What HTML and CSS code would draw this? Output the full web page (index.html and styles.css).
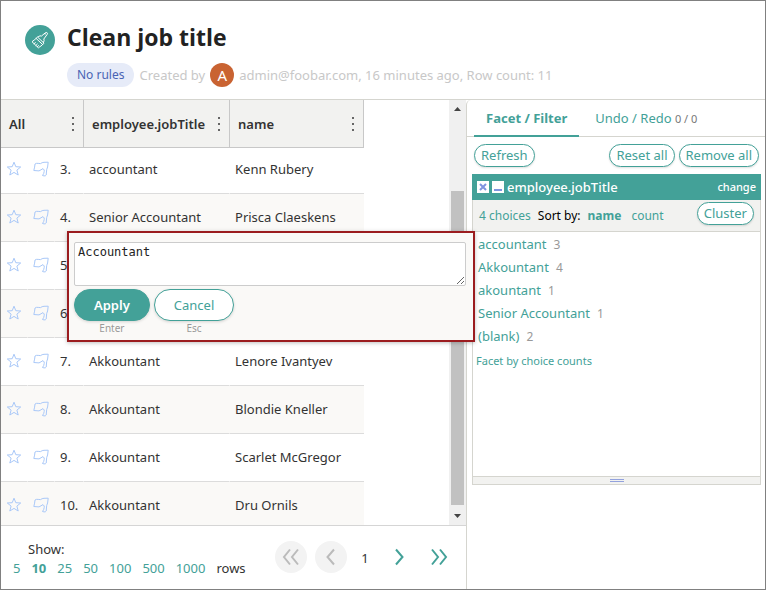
FILE: index.html
```html
<!DOCTYPE html>
<html lang="en">
<head>
<meta charset="utf-8">
<title>Clean job title</title>
<link rel="stylesheet" href="styles.css">
</head>
<body>
<svg class="defs" aria-hidden="true">
  <symbol id="star" viewBox="0 0 16 16"><path d="M8 1.200l1.800 4.500 4.900.3-3.800 3.100 1.300 4.900L8 11.400 3.800 14l1.300-4.900L1.300 6l4.900-.3z"/></symbol>
  <symbol id="flag" viewBox="0 0 16 16"><path d="M2 3Q3.500 2 5.200 2.400L7.500 2.600Q9 1.400 11 1.300L15.200 1.200 14.600 6 13.700 8.500 13.200 14Q12.500 15.200 11 14.900L9.500 14.500Q11 12.500 11.200 10.500L11.200 9 10 7.600 8 8.800 6 9.900 .8 9.500Q1.800 6 2 3Z"/></symbol>
  <symbol id="dots" viewBox="0 0 4 16"><path d="M1 1h2v2H1zM1 7h2v2H1zM1 13h2v2H1z"/></symbol>
</svg>
<div class="app">
  <header class="top">
    <span class="logo"><svg viewBox="0 0 30 30" width="30" height="30"><path d="M10.200 14.200l2.300-2.200 6.500 6.200-2 2-3.600 2.600L7.300 17zM11.100 13.400l6.600 6.200M13 12l2-1.200 1.400.3 4.200-3.500q1.400-.6 1.800.5.3.8-.5 1.700L18.800 14l.3 1.500-.6 2M9 18.700l1.400-1M10.800 20.500l1.500-1.400M12.300 21.800l1.300-1.200M20 9.300l.7-.6"/></svg></span>
    <div>
      <h1>Clean job title</h1>
      <div class="meta"><span class="pill">No rules</span><span class="by">Created by</span><span class="avatar">A</span><span>admin@foobar.com, 16 minutes ago, Row count: 11</span></div>
    </div>
  </header>
  <div class="main">
    <section class="left">
      <div class="grid-area">
        <div class="grid-view">
          <table>
            <colgroup><col class="c-icon"><col class="c-icon"><col class="c-num"><col class="c-title"><col class="c-name"></colgroup>
            <thead><tr>
              <th colspan="3"><div class="head">All<button aria-label="All menu"><svg><use href="#dots"/></svg></button></div></th>
              <th><div class="head">employee.jobTitle<button aria-label="Job title menu"><svg><use href="#dots"/></svg></button></div></th>
              <th><div class="head">name<button aria-label="Name menu"><svg><use href="#dots"/></svg></button></div></th>
            </tr></thead>
            <tbody>
              <tr class="first"><td><svg class="ico"><use href="#star"/></svg></td><td><svg class="ico"><use href="#flag"/></svg></td><td>3.</td><td>accountant</td><td>Kenn Rubery</td></tr>
              <tr><td><svg class="ico"><use href="#star"/></svg></td><td><svg class="ico"><use href="#flag"/></svg></td><td>4.</td><td>Senior Accountant</td><td>Prisca Claeskens</td></tr>
              <tr><td><svg class="ico"><use href="#star"/></svg></td><td><svg class="ico"><use href="#flag"/></svg></td><td>5.</td><td></td><td></td></tr>
              <tr><td><svg class="ico"><use href="#star"/></svg></td><td><svg class="ico"><use href="#flag"/></svg></td><td>6.</td><td></td><td></td></tr>
              <tr><td><svg class="ico"><use href="#star"/></svg></td><td><svg class="ico"><use href="#flag"/></svg></td><td>7.</td><td>Akkountant</td><td>Lenore Ivantyev</td></tr>
              <tr><td><svg class="ico"><use href="#star"/></svg></td><td><svg class="ico"><use href="#flag"/></svg></td><td>8.</td><td>Akkountant</td><td>Blondie Kneller</td></tr>
              <tr><td><svg class="ico"><use href="#star"/></svg></td><td><svg class="ico"><use href="#flag"/></svg></td><td>9.</td><td>Akkountant</td><td>Scarlet McGregor</td></tr>
              <tr><td><svg class="ico"><use href="#star"/></svg></td><td><svg class="ico"><use href="#flag"/></svg></td><td>10.</td><td>Akkountant</td><td>Dru Ornils</td></tr>
            </tbody>
          </table>
        </div>
        <div class="scrollbar">
          <svg viewBox="0 0 17 17"><path d="M5 11h7L8.500 7z"/></svg>
          <div class="track"><div class="thumb"></div></div>
          <svg viewBox="0 0 17 17"><path d="M5 6h7l-3.500 4z"/></svg>
        </div>
      </div>
      <footer class="pager">
        <div class="sizes">
          <div class="show">Show:</div>
          <div class="links"><a href="#">5</a><a href="#" class="on">10</a><a href="#">25</a><a href="#">50</a><a href="#">100</a><a href="#">500</a><a href="#">1000</a><span>rows</span></div>
        </div>
        <nav class="pages">
          <button class="off" aria-label="First page" disabled><svg viewBox="0 0 32 32"><path d="M15 8.500l-6 7.500 6 7.500M23 8.500L17 16l6 7.500"/></svg></button>
          <button class="off" aria-label="Previous page" disabled><svg viewBox="0 0 32 32"><path d="M19 8.500L12.500 16l6.500 7.500"/></svg></button>
          <span>1</span>
          <button aria-label="Next page"><svg viewBox="0 0 32 32"><path d="M13 8.500l6.500 7.500-6.500 7.500"/></svg></button>
          <button aria-label="Last page"><svg viewBox="0 0 32 32"><path d="M9 8.500l6 7.500-6 7.500M17 8.500l6 7.500-6 7.500"/></svg></button>
        </nav>
      </footer>
    </section>
    <aside class="right">
      <nav class="tabs"><a href="#" class="on">Facet / Filter</a><a href="#">Undo / Redo <small>0 / 0</small></a></nav>
      <div class="tools"><button class="round">Refresh</button><span class="spacer"></span><button class="round">Reset all</button><button class="round">Remove all</button></div>
      <section class="facet">
        <div class="facet-head">
          <button class="mini" aria-label="Remove facet"><svg viewBox="0 0 12 12"><path d="M3 3l6 6M9 3L3 9"/></svg></button>
          <button class="mini" aria-label="Minimize facet"><svg viewBox="0 0 12 12"><path d="M2 9h8"/></svg></button>
          <span>employee.jobTitle</span><a href="#">change</a>
        </div>
        <div class="facet-bar"><a href="#">4 choices</a><span>Sort by:</span><a href="#" class="on">name</a><a href="#" class="count">count</a><button class="round">Cluster</button></div>
        <div class="facet-body">
          <ul>
            <li><a href="#">accountant</a> 3</li>
            <li><a href="#">Akkountant</a> 4</li>
            <li><a href="#">akountant</a> 1</li>
            <li><a href="#">Senior Accountant</a> 1</li>
            <li><a href="#">(blank)</a> 2</li>
          </ul>
          <a href="#" class="by-count">Facet by choice counts</a>
        </div>
        <div class="grip"><i></i></div>
      </section>
    </aside>
  </div>
  <form class="popup">
    <textarea aria-label="Cell value" spellcheck="false">Accountant</textarea>
    <div class="actions">
      <div><button type="button" class="apply">Apply</button><span>Enter</span></div>
      <div><button type="button">Cancel</button><span>Esc</span></div>
    </div>
  </form>
</div>
</body>
</html>
```
FILE: styles.css
```css
* { box-sizing: border-box; }
body { margin: 0; font: 13px/20px "Noto Sans", "Open Sans", sans-serif; color: #333; background: #fff; }
a { color: #43a198; text-decoration: none; }
button { font: inherit; color: #43a198; background: none; border: 0; padding: 0; margin: 0; }
.defs { position: absolute; width: 0; height: 0; }
.app { position: relative; display: flex; flex-direction: column; height: 100vh; min-height: 590px; border: 1px solid #808080; }

.top { display: flex; gap: 12px; height: 99px; padding: 20px 24px 0; border-bottom: 1px solid #d5d5cf; }
.logo { width: 30px; height: 30px; margin-top: 4px; border-radius: 50%; background: #43a198; }
.logo path { fill: none; stroke: #fff; stroke-width: 1; stroke-linejoin: round; stroke-linecap: round; }
h1 { margin: 0; font: 700 23px/32px "Open Sans", "Noto Sans", sans-serif; color: #222; }
.meta { display: flex; align-items: center; gap: 5px; margin-top: 10px; color: #c8c8c8; white-space: nowrap; }
.pill { height: 24px; padding: 0 10px; border-radius: 12px; background: #e6ebf8; color: #4a64b4; font-size: 12px; line-height: 24px; }
.avatar { width: 24px; height: 24px; border-radius: 50%; background: #c96332; color: #fff; font-size: 15px; line-height: 24px; text-align: center; }

.main { flex: 1; display: grid; grid-template-columns: minmax(0, 465fr) minmax(0, 299fr); min-height: 0; }
.left { display: flex; flex-direction: column; min-height: 0; }
.grid-area { flex: 1; display: flex; justify-content: space-between; min-height: 0; overflow: hidden; border-bottom: 1px solid #d5d5d5; }
.grid-view { overflow: hidden; }
table { border-spacing: 0; table-layout: fixed; width: 363px; }
.c-icon { width: 27px; }
.c-num { width: 29px; }
.c-title { width: 146px; }
.c-name { width: 134px; }
th { height: 48px; padding: 0 5px 0 8px; text-align: left; font-weight: 600; color: #333; background: #f2f2f0; border-right: 1px solid #c8c8c8; border-bottom: 1px solid #c8c8c8; }
.head { display: flex; justify-content: space-between; align-items: center; }
.head button { display: flex; padding: 0 3px; }
.head svg { width: 4px; height: 16px; fill: #666; }
td { height: 48px; padding: 0 5px 2px; border-right: 1px solid transparent; border-bottom: 1px solid #dcdcdc; white-space: nowrap; }
td:last-child { border-right: 0; }
.first td { height: 46px; padding-bottom: 4px; }
tbody tr:nth-child(even) { background: #faf9f7; }
.ico { display: block; width: 16px; height: 16px; fill: none; stroke: #a9c8f8; stroke-width: 1; stroke-linejoin: round; }
.scrollbar { display: flex; flex-direction: column; width: 17px; background: #f0f0f0; }
.scrollbar svg { width: 17px; height: 17px; fill: #444; }
.track { flex: 1; display: flex; align-items: flex-end; padding: 0 2px 3px; }
.thumb { width: 100%; height: 81%; background: #c1c1c1; }

.pager { display: flex; justify-content: space-between; height: 63px; padding: 14px 11px 0 12px; }
.sizes { line-height: 19px; white-space: nowrap; }
.show { margin-left: 15px; }
.links { display: flex; gap: 11px; }
.links .on, .facet-bar .on { font-weight: 700; }
.pages { display: flex; gap: 8px; margin-top: 1px; line-height: 34px; }
.pages > span { width: 20px; text-align: center; }
.pages button { display: flex; width: 32px; height: 32px; border-radius: 50%; }
.pages .off { background: #f3f3f3; color: #bbb; }
.pages svg { width: 32px; height: 32px; fill: none; stroke: currentColor; stroke-width: 2; }

.right { border-left: 1px solid #d5d5cf; border-top-left-radius: 5px; padding: 0 4px 0 5px; }
.tabs { display: flex; gap: 4px; height: 37px; margin: 0 -4px 0 -5px; padding: 0 7px; border-bottom: 1px solid #d5d5cf; white-space: nowrap; }
.tabs a { height: 37px; padding: 8px 12px 0; }
.tabs .on { font-weight: 700; border-bottom: 2px solid #43a198; }
.tabs small { font-size: 11px; color: #777; }
.tools { display: flex; gap: 4px; padding: 7px 2px 7px; }
.spacer { flex: 1; }
.round { height: 23px; padding: 0 6px; border: 1px solid #43a198; border-radius: 12px; background: #fff; line-height: 21px; white-space: nowrap; box-shadow: 0 1px 2px rgba(0, 0, 0, .12); }
.facet { border: 1px solid #d5d5cf; }
.facet-head { display: flex; align-items: center; gap: 3px; height: 26px; margin: -1px -1px 0; padding: 0 5px; background: #43a198; color: #fff; font-weight: 500; }
.facet-head a { margin-left: auto; color: #fff; font-size: 11px; }
.mini { display: flex; width: 12px; height: 12px; background: #fff; }
.mini svg { width: 12px; height: 12px; stroke: #7f93df; stroke-width: 2; }
.facet-bar { display: flex; align-items: center; gap: 7px; height: 32px; padding: 0 6px; border-bottom: 1px solid #d5d5cf; background: #f2f2f0; font-size: 12px; white-space: nowrap; }
.facet-bar span { color: #000; }
.facet-bar .count { margin-left: 3px; }
.facet-bar .round { margin-left: auto; margin-bottom: 5px; font-size: 13px; }
.facet-body { height: 245px; padding: 1px 3px; border-bottom: 1px solid #d5d5cf; }
ul { list-style: none; margin: 0; padding: 0 2px; line-height: 23px; color: #999; font-size: 12px; }
ul a { font-size: 13px; margin-right: 4px; }
.by-count { display: block; margin-top: 2px; font-size: 11px; line-height: 22px; }
.grip { display: flex; justify-content: center; align-items: center; height: 7px; background: #f2f2f0; }
.grip i { width: 14px; height: 3px; border: solid #93a2dd; border-width: 1px 0; }

.popup { position: absolute; left: 66px; top: 230px; width: 408px; height: 111px; padding: 9px 7px 0 5px; background: #faf9f7; border: 2px solid #9b1c1f; box-shadow: 0 1px 4px rgba(0, 0, 0, .25); }
textarea { display: block; width: 100%; height: 44px; padding: 0 3px; border: 1px solid #ccc; border-radius: 2px; background: #fff; color: #222; font: 12px/18px "DejaVu Sans Mono", monospace; resize: both; }
.actions { display: flex; gap: 4px; margin-top: 3px; }
.actions div { display: flex; flex-direction: column; align-items: center; }
.actions button { height: 32px; padding: 0 19px; border: 1px solid #43a198; border-radius: 16px; background: #fff; box-shadow: 0 1px 3px rgba(0, 0, 0, .15); }
.actions .apply { background: #43a198; color: #fff; font-weight: 600; }
.actions span { font-size: 10px; line-height: 14px; color: #999; }
```
